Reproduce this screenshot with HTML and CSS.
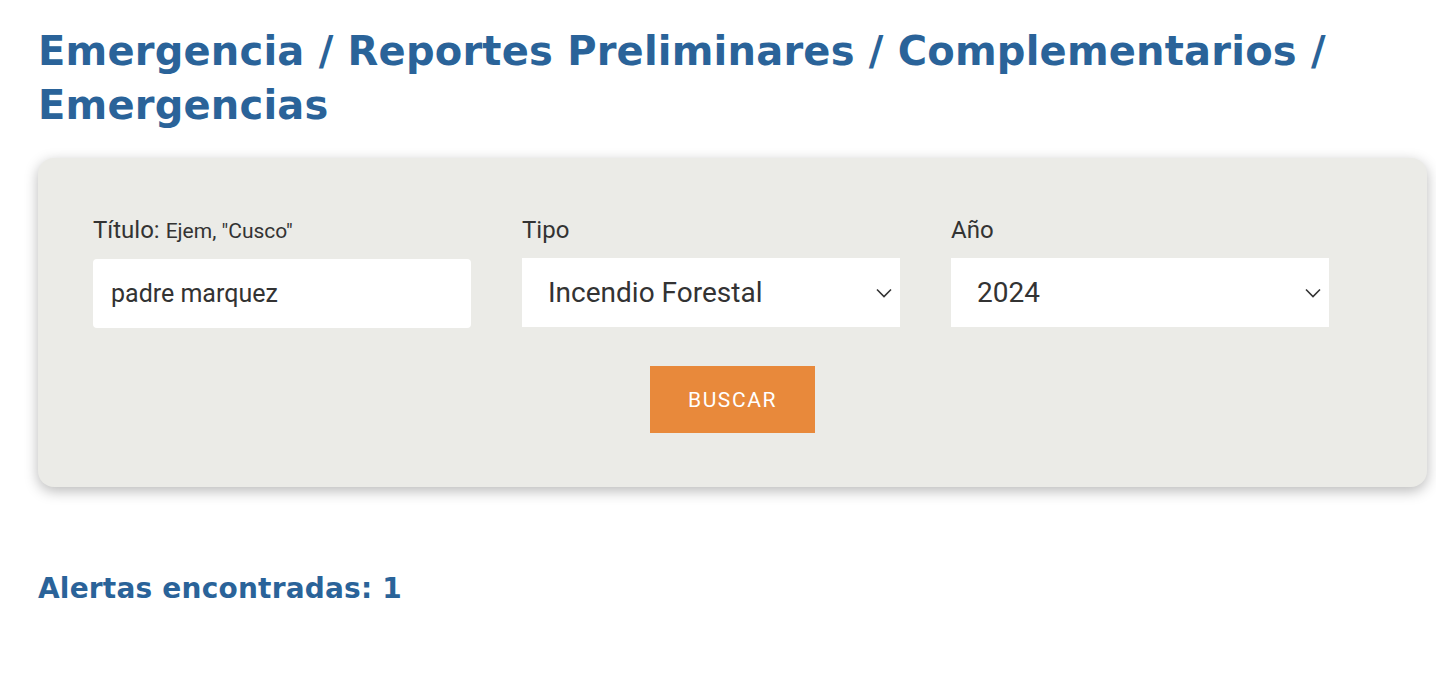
FILE: index.html
```html
<!DOCTYPE html>
<html lang="es">
<head>
    <meta charset="UTF-8">
    <meta name="viewport" content="width=device-width, initial-scale=1.0">
    <title>Emergencias</title>
    <link rel="stylesheet" href="styles.css">
</head>
<body>

<h1 class="page-title">Emergencia / Reportes Preliminares / Complementarios / Emergencias</h1>

<!-- Filtros de búsqueda -->
<form class="search-panel" onsubmit="return false;">
    <div class="fields">
        <div class="field">
            <label for="titulo">Título: <small>Ejem, "Cusco"</small></label>
            <input type="text" id="titulo" class="text-input" value="padre marquez">
        </div>
        <div class="field">
            <label for="tipo">Tipo</label>
            <div class="select-wrap">
                <select id="tipo">
                    <option>Incendio Forestal</option>
                    <option>Inundación</option>
                    <option>Sismo</option>
                </select>
                <svg class="chevron" viewBox="0 0 16 10" width="16" height="10"><path d="M1 1.5 L8 8.5 L15 1.5" fill="none" stroke="#333" stroke-width="1.6"/></svg>
            </div>
        </div>
        <div class="field">
            <label for="anio">Año</label>
            <div class="select-wrap">
                <select id="anio">
                    <option>2024</option>
                    <option>2023</option>
                    <option>2022</option>
                </select>
                <svg class="chevron" viewBox="0 0 16 10" width="16" height="10"><path d="M1 1.5 L8 8.5 L15 1.5" fill="none" stroke="#333" stroke-width="1.6"/></svg>
            </div>
        </div>
    </div>
    <div class="actions">
        <button type="submit" class="search-btn">Buscar</button>
    </div>
</form>

<h2 class="results">Alertas encontradas: 1</h2>

</body>
</html>
```

FILE: styles.css
```css
* {
    margin: 0;
    padding: 0;
    box-sizing: border-box;
}
body {
    background: #fff;
    font-family: Roboto, 'Liberation Sans', sans-serif;
    color: #333;
    padding: 24px 9px 0 38px;
}
.page-title {
    font-family: 'DejaVu Sans', sans-serif;
    font-weight: bold;
    font-size: 40px;
    line-height: 54px;
    color: #2a6399;
    letter-spacing: 0.2px;
}
.search-panel {
    margin-top: 26px;
    background: #ebebe7;
    border-radius: 16px;
    box-shadow: 0 4px 14px rgba(0, 0, 0, 0.28);
    padding: 58px 55px 54px;
}
.fields {
    display: grid;
    grid-template-columns: repeat(3, 378px);
    column-gap: 51px;
}
.field label {
    display: block;
    font-size: 24px;
    line-height: 28px;
    margin-bottom: 14px;
    color: #333;
}
.field label small {
    font-size: 21px;
}
.text-input {
    width: 100%;
    height: 69px;
    border: none;
    border-radius: 4px;
    background: #fff;
    padding: 0 18px;
    font-family: Roboto, sans-serif;
    font-size: 25px;
    color: #333;
    outline: none;
}
.select-wrap {
    position: relative;
}
.select-wrap select {
    width: 100%;
    height: 69px;
    border: none;
    border-radius: 0;
    background: #fff;
    padding: 0 26px;
    font-family: Roboto, sans-serif;
    font-size: 28px;
    color: #333;
    appearance: none;
    -webkit-appearance: none;
    outline: none;
}
.chevron {
    position: absolute;
    right: 8px;
    top: 30px;
    pointer-events: none;
}
.actions {
    display: flex;
    justify-content: center;
    margin-top: 38px;
}
.search-btn {
    width: 165px;
    height: 67px;
    background: #e8893b;
    color: #fff;
    border: none;
    font-family: Roboto, sans-serif;
    font-size: 21px;
    letter-spacing: 1.6px;
    text-transform: uppercase;
    cursor: pointer;
}
.results {
    font-family: 'DejaVu Sans', sans-serif;
    font-weight: bold;
    font-size: 28px;
    color: #2a6399;
    margin-top: 85px;
    letter-spacing: 0.2px;
}
```
